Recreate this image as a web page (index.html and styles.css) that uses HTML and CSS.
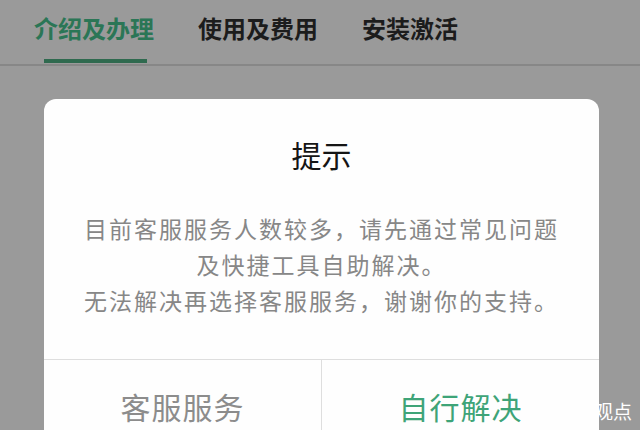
FILE: index.html
```html
<!DOCTYPE html>
<html>
<head>
  <meta charset="utf-8">
  <meta name="viewport" content="width=device-width, initial-scale=1.0">
  <title>提示</title>
  <link rel="stylesheet" href="styles.css">
</head>
<body>
  <nav class="tabs">
    <div class="tab active">介绍及办理</div>
    <div class="tab">使用及费用</div>
    <div class="tab">安装激活</div>
  </nav>

  <main>
    <section class="dialog">
      <h2 class="dialog-title">提示</h2>
      <p class="dialog-text">
        目前客服服务人数较多，请先通过常见问题<br>
        及快捷工具自助解决。<br>
        无法解决再选择客服服务，谢谢你的支持。
      </p>
      <div class="dialog-actions">
        <button class="btn">客服服务</button>
        <button class="btn primary">自行解决</button>
      </div>
    </section>
  </main>

  <!-- watermark over the corner -->
  <div class="watermark">观点</div>
</body>
</html>
```

FILE: styles.css
```css
body {
  font-family: "Noto Sans CJK SC", "Noto Sans", sans-serif;
  margin: 0;
  padding: 0;
  background-color: #9a9a9a;
  height: 430px;
  overflow: hidden;
  position: relative;
}

.tabs {
  display: flex;
  gap: 44px;
  height: 64px;
  padding-left: 34px;
  border-bottom: 2px solid #878787;
}

.tab {
  display: flex;
  flex-direction: column;
  font-size: 24px;
  font-weight: bold;
  line-height: 24px;
  padding-top: 16px;
  color: #1c1c1c;
}

.tab.active {
  color: #2b7656;
}

.tab.active::after {
  content: "";
  display: block;
  width: 103px;
  height: 4px;
  margin: auto 0 1px 10px;
  background-color: #2f6a4f;
}

main {
  padding: 33px 0 0 44px;
}

.dialog {
  width: 555px;
  height: 400px;
  background-color: #fefefe;
  border-radius: 12px;
}

.dialog-title {
  margin: 0;
  padding-top: 40px;
  font-size: 30px;
  font-weight: normal;
  line-height: 30px;
  text-align: center;
  color: #151515;
}

.dialog-text {
  margin: 41px 0 0;
  padding-bottom: 41px;
  font-size: 23px;
  line-height: 36px;
  letter-spacing: 2px;
  text-align: center;
  color: #878787;
}

.dialog-actions {
  display: flex;
  border-top: 1px solid #dedede;
}

.btn {
  flex: 1;
  height: 92px;
  padding: 0;
  border: none;
  background: none;
  font-family: inherit;
  font-size: 30px;
  line-height: 30px;
  letter-spacing: 1px;
  color: #8c8c8c;
  text-align: center;
}

.btn:first-child {
  border-right: 1px solid #dedede;
}

.btn.primary {
  color: #3ea478;
}

.watermark {
  position: absolute;
  left: 594px;
  top: 401px;
  font-size: 19px;
  line-height: 19px;
  color: #ffffff;
}
```
